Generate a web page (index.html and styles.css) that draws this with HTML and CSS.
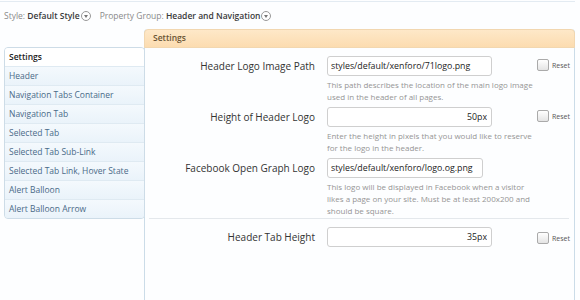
FILE: index.html
```html
<!DOCTYPE html>
<html lang="en">
<head>
    <meta charset="UTF-8">
    <title>Style Properties</title>
    <link rel="stylesheet" href="styles.css">
</head>
<body>
    <!-- Filtros de estilo y grupo -->
    <div class="filters">
        <span class="filter">Style: <b>Default Style</b><span class="drop"></span></span>
        <span class="filter">Property Group: <b>Header and Navigation</b><span class="drop"></span></span>
    </div>

    <div class="main">
        <!-- Lista lateral -->
        <ul class="sidebar">
            <li class="head">Settings</li>
            <li>Header</li>
            <li>Navigation Tabs Container</li>
            <li>Navigation Tab</li>
            <li>Selected Tab</li>
            <li>Selected Tab Sub-Link</li>
            <li>Selected Tab Link, Hover State</li>
            <li>Alert Balloon</li>
            <li>Alert Balloon Arrow</li>
        </ul>

        <!-- Panel principal -->
        <div class="panel">
            <div class="panel-head">Settings</div>
            <div class="panel-body">
                <div class="row">
                    <label>Header Logo Image Path</label>
                    <div class="field">
                        <input type="text" class="wide" value="styles/default/xenforo/71logo.png">
                        <p class="hint">This path describes the location of the main logo image used in the header of all pages.</p>
                    </div>
                    <span class="reset"><span class="box"></span>Reset</span>
                </div>
                <div class="row">
                    <label>Height of Header Logo</label>
                    <div class="field">
                        <input type="text" class="wide num" value="50px">
                        <p class="hint">Enter the height in pixels that you would like to reserve for the logo in the header.</p>
                    </div>
                    <span class="reset"><span class="box"></span>Reset</span>
                </div>
                <div class="row">
                    <label>Facebook Open Graph Logo</label>
                    <div class="field">
                        <input type="text" class="short" value="styles/default/xenforo/logo.og.png">
                        <p class="hint">This logo will be displayed in Facebook when a visitor likes a page on your site. Must be at least 200x200 and should be square.</p>
                    </div>
                </div>
                <div class="sep"></div>
                <div class="row">
                    <label>Header Tab Height</label>
                    <div class="field">
                        <input type="text" class="wide num" value="35px">
                    </div>
                    <span class="reset low"><span class="box"></span>Reset</span>
                </div>
            </div>
        </div>
    </div>
</body>
</html>
```

FILE: styles.css
```css
body {
    margin: 0;
    background: #fdfeff;
    font-family: 'Open Sans', sans-serif;
    color: #333;
    height: 300px;
    overflow: hidden;
}

.filters {
    border-top: 1px solid #e3ebf2;
    margin: 1px 5px 0 0;
    padding: 8px 4px 0;
    height: 19px;
    font-size: 8.5px;
    color: #8a8a8a;
    display: flex;
    gap: 9px;
}

.filter b {
    font-weight: 600;
    color: #3a3a3a;
}

.drop {
    display: inline-block;
    width: 8px;
    height: 8px;
    border: 1px solid #999;
    border-radius: 50%;
    margin-left: 1px;
    vertical-align: -2px;
    position: relative;
    background: #fff;
}

.drop::after {
    content: '';
    position: absolute;
    left: 2px;
    top: 3px;
    border-left: 2px solid transparent;
    border-right: 2px solid transparent;
    border-top: 3px solid #777;
}

.main {
    display: flex;
}

.sidebar {
    list-style: none;
    margin: 18px -1px 0 4px;
    padding: 0;
    width: 139px;
    flex-shrink: 0;
    align-self: flex-start;
    border: 1px solid #cddce7;
    border-radius: 4px;
    background: #eef5fb;
    font-size: 8.5px;
    overflow: hidden;
    position: relative;
    z-index: 2;
}

.sidebar li {
    height: 18px;
    line-height: 18px;
    padding-left: 4px;
    border-top: 1px solid #dfeaf2;
    color: #4a6a88;
    background: linear-gradient(#f4f9fd, #eaf3fa);
}

.sidebar li.head {
    border-top: none;
    background: #fff;
    color: #222;
    font-weight: 600;
}

.panel {
    flex: 1;
    margin-right: 5px;
    border: 1px solid #cbdce8;
    border-top: none;
    border-radius: 4px 4px 0 0;
    height: 280px;
}

.panel-head {
    height: 17px;
    line-height: 16px;
    margin: 0 -1px;
    padding-left: 8px;
    background: linear-gradient(#fee8c8, #fcdcb0);
    border: 1px solid #f2d7b0;
    border-radius: 4px 4px 0 0;
    font-size: 8.5px;
    font-weight: 600;
    color: #6a5535;
}

.panel-body {
    padding-top: 8px;
}

.row {
    display: grid;
    grid-template-columns: 170px 200px 1fr;
    column-gap: 12px;
    margin-bottom: 4px;
}

.row label {
    text-align: right;
    font-size: 10px;
    line-height: 20px;
    color: #333;
}

.field input {
    display: block;
    box-sizing: border-box;
    height: 20px;
    border: 1px solid #cfcfcf;
    border-radius: 3px;
    padding: 0 4px 0 3px;
    font-family: 'Open Sans', sans-serif;
    font-size: 8.8px;
    color: #222;
    background: #fff;
}

.field input.wide {
    width: 165px;
}

.field input.short {
    width: 156px;
}

.field input.num {
    text-align: right;
}

.hint {
    margin: 3px 0 0;
    font-size: 8px;
    line-height: 12px;
    color: #959595;
    width: 215px;
}

.reset {
    font-size: 7px;
    color: #555;
    display: flex;
    align-items: center;
    height: 14px;
    margin-top: 2px;
    margin-left: -2px;
}

.reset.low {
    margin-top: 4px;
}

.box {
    width: 10px;
    height: 10px;
    border: 1px solid #aaa;
    border-radius: 2px;
    background: linear-gradient(#fff, #e4e4e4);
    margin-right: 3px;
}

.sep {
    height: 1px;
    background: #e4e8ec;
    margin: -3px 5px 8px 4px;
}
```
